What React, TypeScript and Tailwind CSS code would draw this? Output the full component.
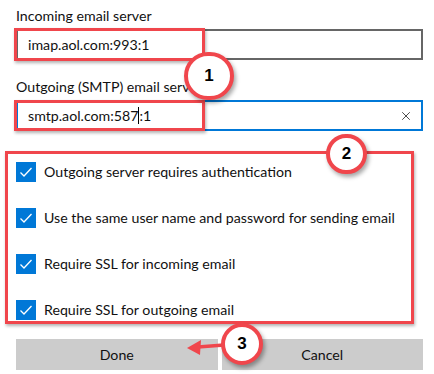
import { X } from "lucide-react";

const options = [
  "Outgoing server requires authentication",
  "Use the same user name and password for sending email",
  "Require SSL for incoming email",
  "Require SSL for outgoing email",
];

function Check() {
  return (
    <div className="w-5 h-5 bg-[#0078d7] flex items-center justify-center shrink-0">
      <svg width="14" height="14" viewBox="0 0 14 14" fill="none">
        <path d="M1.5 7.5 L5 11 L12.5 3" stroke="white" strokeWidth="1.3" />
      </svg>
    </div>
  );
}

function Step({ n, className }: { n: number; className: string }) {
  return (
    <div
      className={`absolute rounded-full bg-white border-4 border-[#f0464c] flex items-center justify-center font-bold text-[17px] text-black shadow-[2px_3px_4px_rgba(0,0,0,0.35)] ${className}`}
      style={{ fontFamily: '"Liberation Sans", Arial, sans-serif' }}
    >
      {n}
    </div>
  );
}

export default function App() {
  return (
    <div
      className="relative w-[434px] h-[374px] bg-white overflow-hidden pl-4 pr-[11px] text-[14.2px] text-[#111]"
      style={{ fontFamily: 'Lato, "Noto Sans", sans-serif' }}
    >
      <div className="pt-[6px] leading-5">Incoming email server</div>
      <div className="mt-[3px] h-[31px] border-2 border-[#666] flex items-center pl-[10px]">
        imap.aol.com:993:1
      </div>

      <div className="mt-[17px] leading-5 whitespace-nowrap">Outgoing (SMTP) email server</div>
      <div className="mt-[3px] h-[31px] border-2 border-[#0078d7] flex items-center pl-[10px] pr-2">
        <span>smtp.aol.com:587</span>
        <span className="w-px h-[17px] bg-black" />
        <span>:1</span>
        <X size={14} strokeWidth={1.5} className="ml-auto text-[#333]" />
      </div>

      <div className="mt-[31px] flex flex-col gap-[26px]">
        {options.map((o) => (
          <label key={o} className="flex items-center gap-2 h-5 leading-5 whitespace-nowrap">
            <Check />
            <span>{o}</span>
          </label>
        ))}
      </div>

      <div className="mt-[19px] flex gap-1">
        <button className="flex-1 h-[31px] bg-[#cccccc]">Done</button>
        <button className="flex-1 h-[31px] bg-[#cccccc]">Cancel</button>
      </div>

      {/* annotation boxes */}
      <div className="absolute left-[14px] top-[28px] w-[191px] h-[33px] border-[3px] border-[#f0464c] shadow-[1px_2px_3px_rgba(0,0,0,0.3)]" />
      <div className="absolute left-[14px] top-[100px] w-[191px] h-[31px] border-[3px] border-[#f0464c] shadow-[1px_2px_3px_rgba(0,0,0,0.3)]" />
      <div className="absolute left-[5px] top-[151px] w-[409px] h-[173px] border-[3px] border-[#f0464c] shadow-[1px_2px_3px_rgba(0,0,0,0.3)]" />

      {/* arrow for step 3 */}
      <svg className="absolute left-[184px] top-[336px]" width="44" height="22" viewBox="0 0 44 22">
        <path d="M40 9 L14 11" stroke="#f0464c" strokeWidth="3.5" />
        <path d="M3 12 L17 4 L16 19 Z" fill="#f0464c" />
      </svg>

      <Step n={1} className="left-[184px] top-[52px] w-[50px] h-[48px]" />
      <Step n={2} className="left-[326px] top-[134px] w-[41px] h-[40px]" />
      <Step n={3} className="left-[221px] top-[323px] w-[42px] h-[42px]" />
    </div>
  );
}
